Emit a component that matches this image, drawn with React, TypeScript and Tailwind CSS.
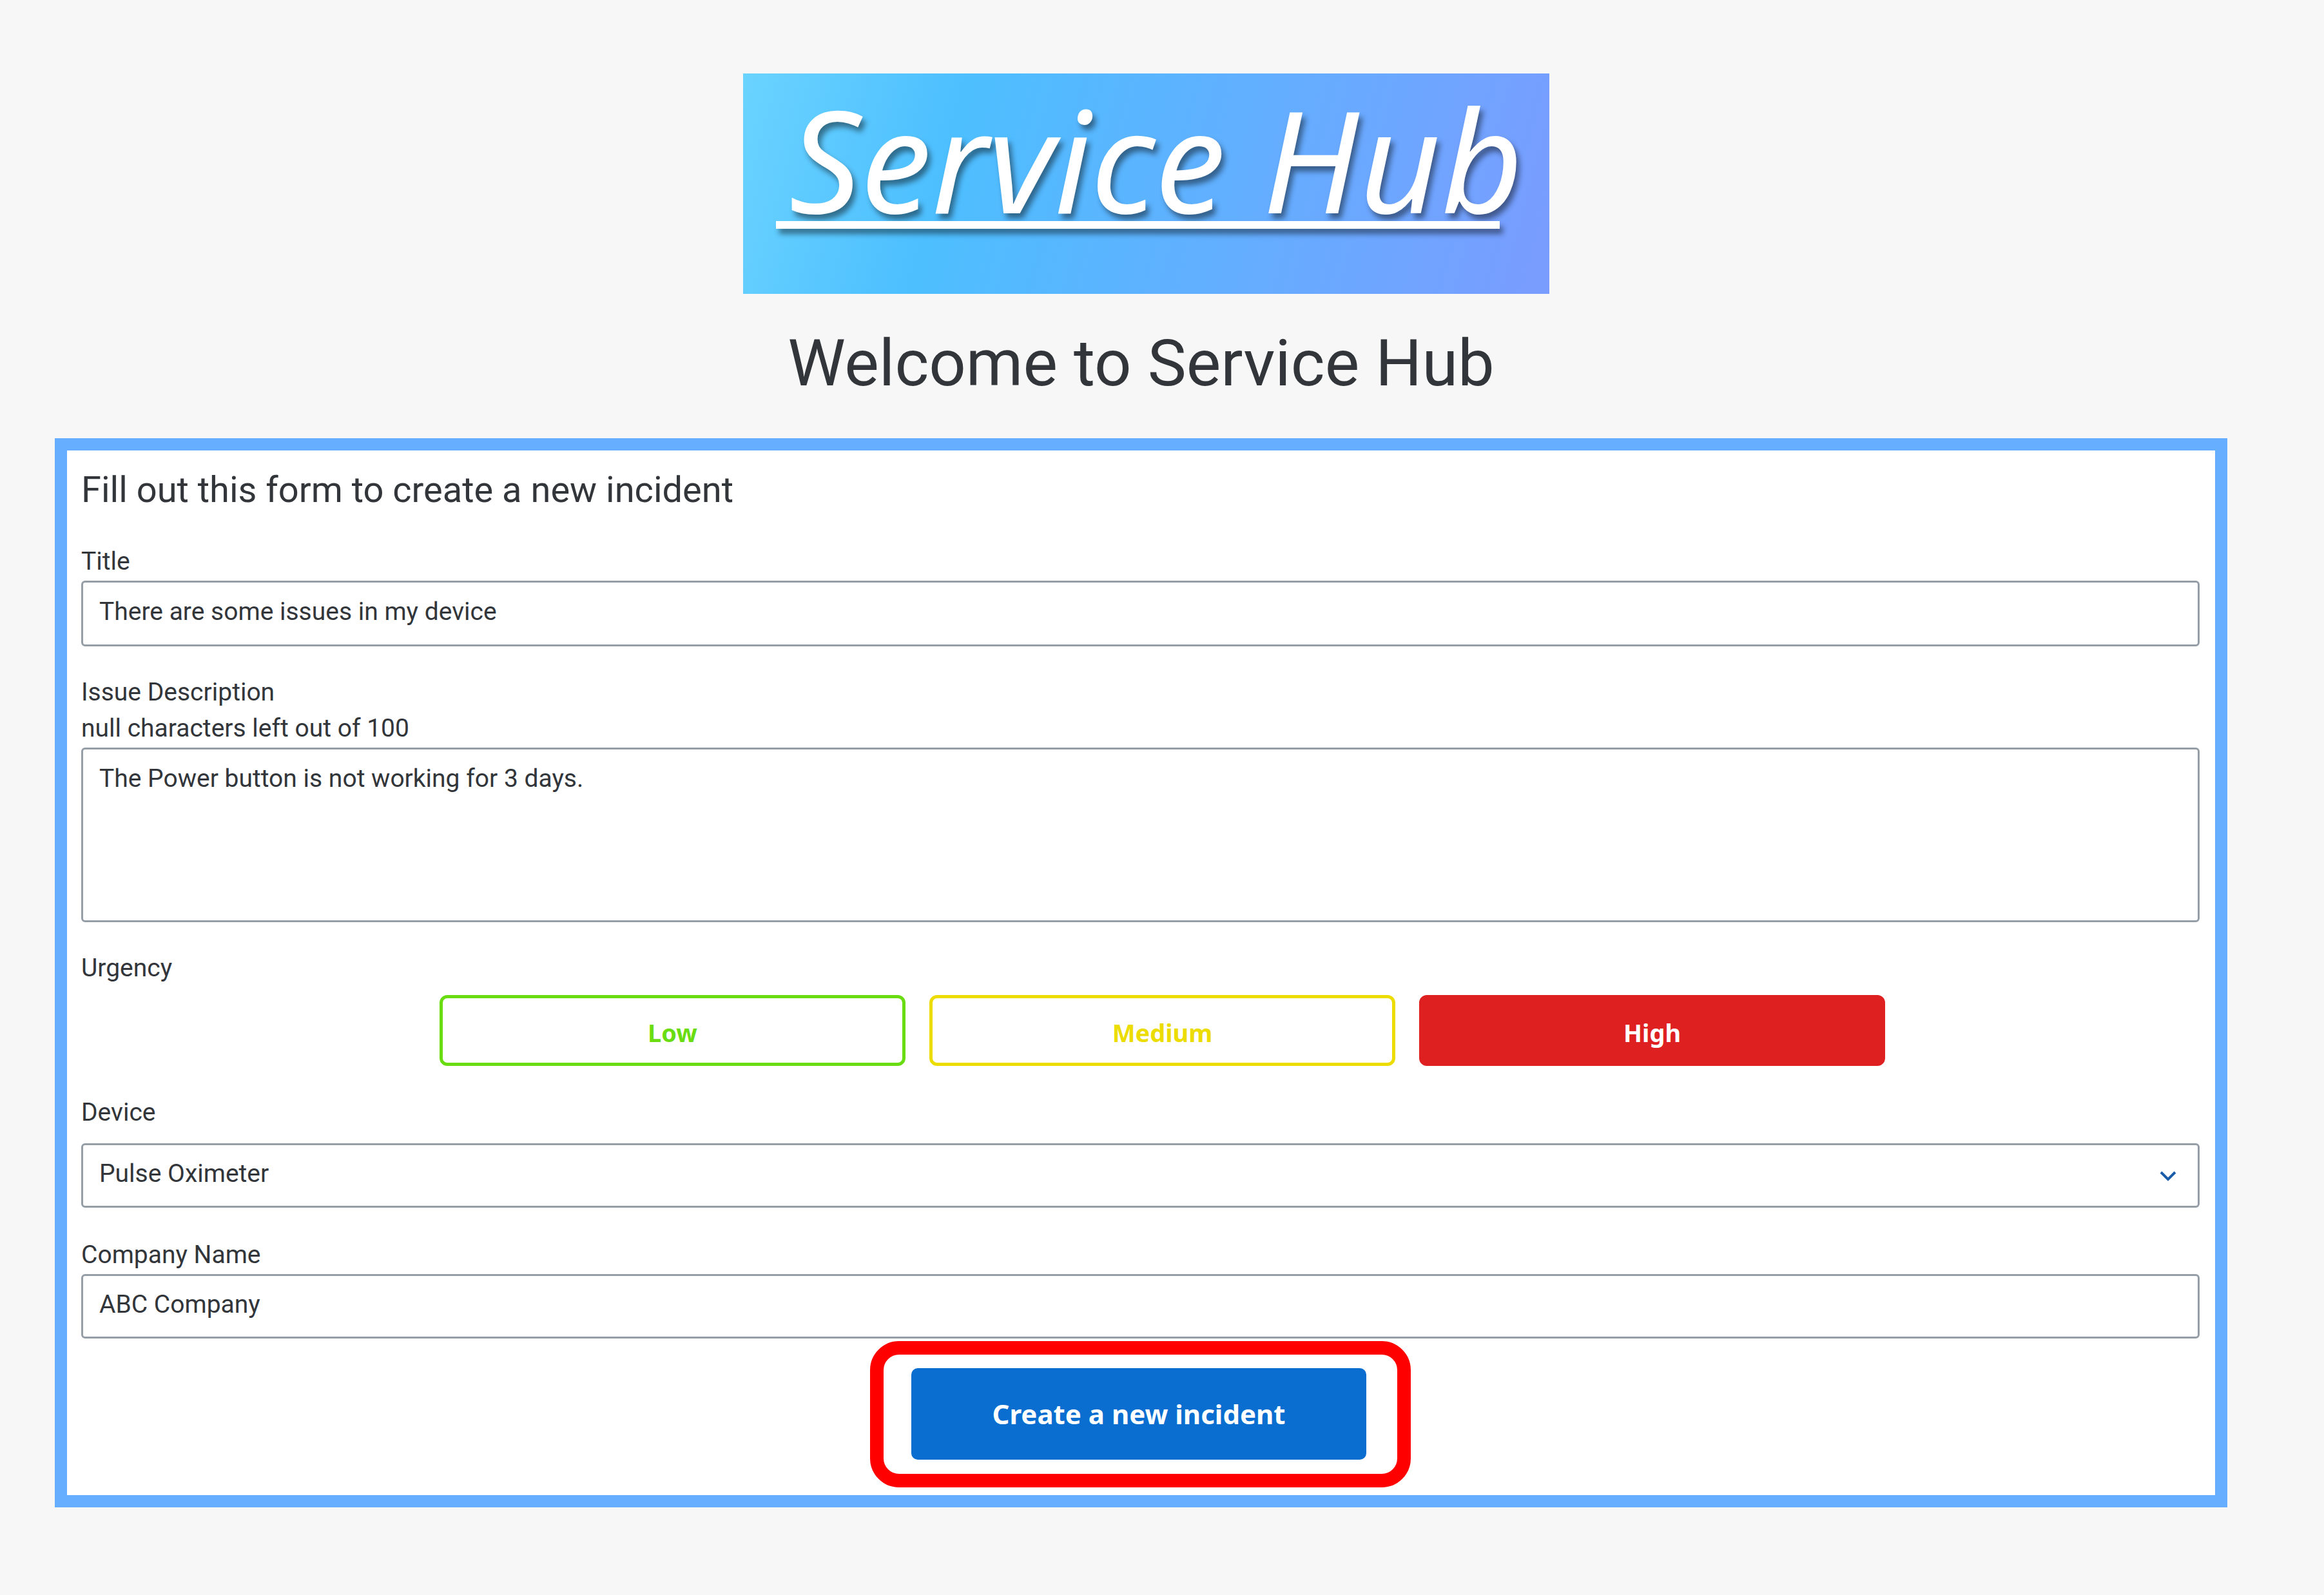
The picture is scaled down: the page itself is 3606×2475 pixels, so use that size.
import { useState } from "react";
import type { ReactNode } from "react";

const field =
  "block w-full rounded-[6px] border-[3px] border-[#959da6] bg-white px-[25px] text-[39px] leading-[50px] text-[#32363a] outline-none";

const urgencies = [
  {
    name: "Low",
    idle: "border-[#69dd12] bg-white text-[#69dd12]",
    active: "border-[#69dd12] bg-[#69dd12] text-white",
  },
  {
    name: "Medium",
    idle: "border-[#ecdc00] bg-white text-[#ecdc00]",
    active: "border-[#ecdc00] bg-[#ecdc00] text-white",
  },
  {
    name: "High",
    idle: "border-[#df2020] bg-white text-[#df2020]",
    active: "border-[#df2020] bg-[#df2020] text-white",
  },
];

function Label({ htmlFor, children }: { htmlFor: string; children: ReactNode }) {
  return (
    <label htmlFor={htmlFor} className="block text-[39px] leading-[56px]">
      {children}
    </label>
  );
}

function Logo() {
  return (
    <svg
      viewBox="0 0 1251 342"
      role="img"
      aria-label="Service Hub"
      className="ml-4 w-[1251px] max-w-full overflow-visible bg-[linear-gradient(105deg,#6ad3ff_0%,#4dbfff_26%,#7a9cff_100%)]"
    >
      <g fill="#fff" className="drop-shadow-[5px_8px_4px_rgba(0,0,0,0.45)]">
        <text
          x="641"
          y="217"
          textAnchor="middle"
          fontSize="220"
          fontStyle="italic"
          fontFamily="'Noto Sans', sans-serif"
        >
          Service Hub
        </text>
        <rect x="51" y="229" width="1123" height="12" />
      </g>
    </svg>
  );
}

export default function App() {
  const [urgency, setUrgency] = useState("High");

  return (
    <div className="min-h-screen bg-[#f7f7f7] pt-[114px] pr-[150px] pb-[136px] pl-[85px] font-['Roboto',sans-serif] text-[#32363a]">
      <header className="flex flex-col items-center">
        <Logo />
        <h1 className="mt-[42px] text-[101px] leading-[132px]">Welcome to Service Hub</h1>
      </header>

      <form
        className="mt-[50px] border-[19px] border-[#66aeff] bg-white pt-[26px] pr-6 pb-3 pl-[22px]"
        onSubmit={(e) => e.preventDefault()}
      >
        <h2 className="text-[56px] leading-[70px]">Fill out this form to create a new incident</h2>

        <div className="mt-12">
          <Label htmlFor="title">Title</Label>
          <input
            id="title"
            defaultValue="There are some issues in my device"
            className={`${field} mt-[2px] h-[102px] pb-[6px]`}
          />
        </div>

        <div className="mt-[43px]">
          <Label htmlFor="description">Issue Description</Label>
          <p className="text-[39px] leading-[56px]">null characters left out of 100</p>
          <textarea
            id="description"
            defaultValue="The Power button is not working for 3 days."
            className={`${field} mt-[2px] h-[271px] resize-none pt-5`}
          />
        </div>

        <fieldset className="mt-[43px]">
          <legend className="text-[39px] leading-[56px]">Urgency</legend>
          <div className="mt-[14px] flex justify-center gap-[37px]">
            {urgencies.map(({ name, idle, active }) => (
              <button
                key={name}
                type="button"
                aria-pressed={urgency === name}
                onClick={() => setUrgency(name)}
                className={`h-[110px] w-[22%] rounded-[12px] border-[5px] pt-[6px] font-['Noto_Sans',sans-serif] text-[38px] leading-[50px] font-bold first:ml-[68px] ${
                  urgency === name ? active : idle
                }`}
              >
                {name}
              </button>
            ))}
          </div>
        </fieldset>

        <div className="mt-[44px]">
          <Label htmlFor="device">Device</Label>
          <div className="relative mt-[20px]">
            <select id="device" className={`${field} h-[100px] appearance-none pb-[6px]`}>
              <option>Pulse Oximeter</option>
            </select>
            <svg
              viewBox="0 0 26 16"
              className="pointer-events-none absolute top-[43px] right-9 w-[26px]"
              aria-hidden="true"
            >
              <path d="M2 2 L13 13 L24 2" fill="none" stroke="#1a5ca8" strokeWidth="4" />
            </svg>
          </div>
        </div>

        <div className="mt-[45px]">
          <Label htmlFor="company">Company Name</Label>
          <input
            id="company"
            defaultValue="ABC Company"
            className={`${field} mt-[2px] h-[100px] pb-[6px]`}
          />
        </div>

        <div className="mx-auto mt-[4px] w-fit rounded-[45px] border-[21px] border-[#ff0000] pt-[21px] pr-[48px] pb-[22px] pl-[43px]">
          <button
            type="submit"
            className="block h-[142px] w-[706px] rounded-[10px] bg-[#0a6ed1] font-['Noto_Sans',sans-serif] text-[42px] leading-[56px] font-bold text-white"
          >
            Create a new incident
          </button>
        </div>
      </form>
    </div>
  );
}
